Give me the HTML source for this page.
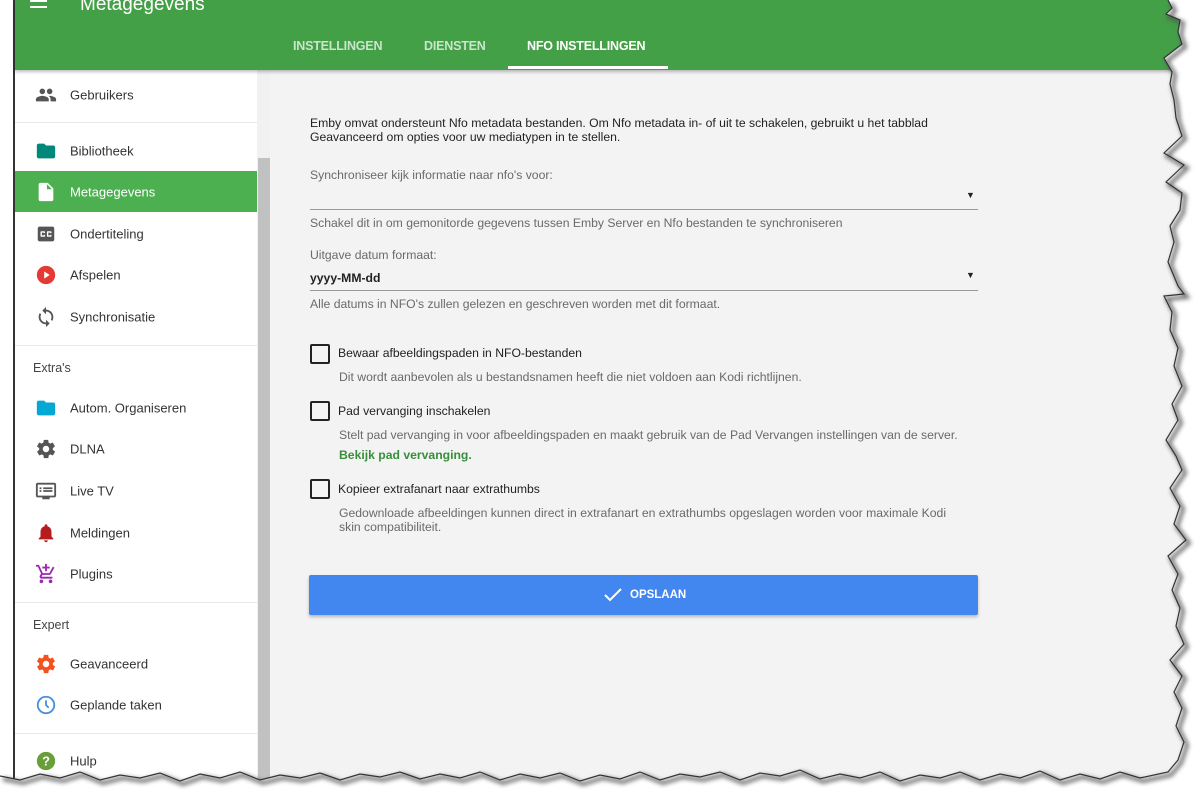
<!DOCTYPE html>
<html><head><meta charset="utf-8"><style>
*{margin:0;padding:0;box-sizing:border-box}
body{width:1200px;height:795px;overflow:hidden;background:#fff;font-family:"Liberation Sans",sans-serif;position:relative}
.abs{position:absolute}
#leftline{left:13px;top:0;width:2px;height:795px;background:#333}
#hdr{left:15px;top:0;width:1185px;height:70px;background:#43a047;box-shadow:0 2px 3px rgba(0,0,0,.25);z-index:2}
.tab{position:absolute;top:39px;font-size:12.5px;font-weight:bold;color:rgba(255,255,255,.72);letter-spacing:-.2px}
#side{left:15px;top:70px;width:242px;height:725px;background:#fff}
#sb{left:257px;top:70px;width:13px;height:725px;background:#f1f1f1}
#thumb{left:258px;top:158px;width:12px;height:637px;background:#c1c1c1}
#main{left:270px;top:70px;width:930px;height:725px;background:#f3f3f3}
.item{position:absolute;left:0;width:242px;height:41px;font-size:13px;color:#333}
.item span{position:absolute;left:55px;top:50%;transform:translateY(-50%)}
.item svg{position:absolute;left:20px;top:50%;transform:translateY(-50%)}
.div{position:absolute;left:0;width:242px;height:1px;background:#e8e8e8}
.hd{position:absolute;left:18px;font-size:12.5px;color:#444}
.t{position:absolute;left:310px;font-size:12.2px;color:#222;white-space:nowrap}
.g{color:#6a6a6a}
.line{position:absolute;left:310px;width:668px;height:1px;background:#999}
.arr{position:absolute;left:966px;font-size:9px;color:#222}
.cb{position:absolute;left:310px;width:20px;height:20px;border:2px solid #222;border-radius:2px}
</style></head><body>
<div class="abs" id="leftline"></div>
<div class="abs" id="hdr">
 <div class="abs" style="left:15px;top:0px;width:17px;height:2px;background:#fff"></div>
 <div class="abs" style="left:15px;top:6px;width:17px;height:2px;background:#fff"></div>
 <div class="abs" style="left:65px;top:-6px;font-size:19px;color:#fff">Metagegevens</div>
 <div class="tab" style="left:278px">INSTELLINGEN</div>
 <div class="tab" style="left:409px">DIENSTEN</div>
 <div class="tab" style="left:512px;color:#fff">NFO INSTELLINGEN</div>
 <div class="abs" style="left:493px;top:66px;width:160px;height:3px;background:#fff"></div>
</div>
<div class="abs" id="side">
 <div class="item" style="top:4px"><svg width="22" height="22" viewBox="0 0 24 24"><path fill="#555" d="M16 11c1.7 0 3-1.3 3-3s-1.3-3-3-3-3 1.3-3 3 1.3 3 3 3zm-8 0c1.7 0 3-1.3 3-3S9.7 5 8 5 5 6.3 5 8s1.3 3 3 3zm0 2c-2.3 0-7 1.2-7 3.5V19h14v-2.5C15 14.2 10.3 13 8 13zm8 0c-.3 0-.6 0-1 .1 1.2.8 2 2 2 3.4V19h6v-2.5c0-2.3-4.7-3.5-7-3.5z"/></svg><span>Gebruikers</span></div>
 <div class="div" style="top:52px"></div>
 <div class="item" style="top:60px"><svg width="22" height="22" viewBox="0 0 24 24"><path fill="#00897b" d="M10 4H4c-1.1 0-2 .9-2 2v12c0 1.1.9 2 2 2h16c1.1 0 2-.9 2-2V8c0-1.1-.9-2-2-2h-8l-2-2z"/></svg><span>Bibliotheek</span></div>
 <div class="item" style="top:101px;background:#4caf50;color:#fff"><svg width="22" height="22" viewBox="0 0 24 24"><path fill="#fff" d="M6 2c-1.1 0-2 .9-2 2v16c0 1.1.9 2 2 2h12c1.1 0 2-.9 2-2V8l-6-6H6zm7 7V3.5L18.5 9H13z"/></svg><span>Metagegevens</span></div>
 <div class="item" style="top:143px"><svg width="22" height="22" viewBox="0 0 24 24"><path fill="#555" d="M19 4H5c-1.1 0-2 .9-2 2v12c0 1.1.9 2 2 2h14c1.1 0 2-.9 2-2V6c0-1.1-.9-2-2-2zm-8 7H9.5v-.5h-2v3h2V13H11v1c0 .6-.4 1-1 1H7c-.6 0-1-.4-1-1v-4c0-.6.4-1 1-1h3c.6 0 1 .4 1 1v1zm7 0h-1.5v-.5h-2v3h2V13H18v1c0 .6-.4 1-1 1h-3c-.6 0-1-.4-1-1v-4c0-.6.4-1 1-1h3c.6 0 1 .4 1 1v1z"/></svg><span>Ondertiteling</span></div>
 <div class="item" style="top:184px"><svg width="22" height="22" viewBox="0 0 24 24"><circle cx="12" cy="12" r="10" fill="#e53935"/><path fill="#fff" d="M10 8l6 4-6 4z"/></svg><span>Afspelen</span></div>
 <div class="item" style="top:226px"><svg width="22" height="22" viewBox="0 0 24 24"><path fill="#555" d="M12 4V1L8 5l4 4V6c3.3 0 6 2.7 6 6 0 1-.3 2-.7 2.8l1.5 1.5C19.5 15 20 13.6 20 12c0-4.4-3.6-8-8-8zm0 14c-3.3 0-6-2.7-6-6 0-1 .3-2 .7-2.8L5.2 7.7C4.5 9 4 10.4 4 12c0 4.4 3.6 8 8 8v3l4-4-4-4v3z"/></svg><span>Synchronisatie</span></div>
 <div class="div" style="top:275px"></div>
 <div class="hd" style="top:291px">Extra's</div>
 <div class="item" style="top:317px"><svg width="22" height="22" viewBox="0 0 24 24"><path fill="#03a9d4" d="M10 4H4c-1.1 0-2 .9-2 2v12c0 1.1.9 2 2 2h16c1.1 0 2-.9 2-2V8c0-1.1-.9-2-2-2h-8l-2-2z"/></svg><span>Autom. Organiseren</span></div>
 <div class="item" style="top:358px"><svg width="22" height="22" viewBox="0 0 24 24"><path fill="#555" d="M19.4 13c.1-.3.1-.7.1-1s0-.7-.1-1l2.1-1.6c.2-.2.2-.4.1-.6l-2-3.5c-.1-.2-.4-.3-.6-.2l-2.5 1c-.5-.4-1.1-.7-1.7-1L14.5 2.4c0-.2-.2-.4-.5-.4h-4c-.3 0-.5.2-.5.4l-.4 2.7c-.6.2-1.2.6-1.7 1l-2.5-1c-.2-.1-.5 0-.6.2l-2 3.5c-.1.2-.1.5.1.6L4.6 11c0 .3-.1.7-.1 1s0 .7.1 1l-2.1 1.6c-.2.2-.2.4-.1.6l2 3.5c.1.2.4.3.6.2l2.5-1c.5.4 1.1.7 1.7 1l.4 2.7c0 .2.2.4.5.4h4c.3 0 .5-.2.5-.4l.4-2.7c.6-.2 1.2-.6 1.7-1l2.5 1c.2.1.5 0 .6-.2l2-3.5c.1-.2.1-.5-.1-.6L19.4 13zM12 15.5c-1.9 0-3.5-1.6-3.5-3.5s1.6-3.5 3.5-3.5 3.5 1.6 3.5 3.5-1.6 3.5-3.5 3.5z"/></svg><span>DLNA</span></div>
 <div class="item" style="top:400px"><svg width="22" height="22" viewBox="0 0 24 24"><path fill="#555" d="M21 3H3c-1.1 0-2 .9-2 2v12c0 1.1.9 2 2 2h5v2h8v-2h5c1.1 0 2-.9 2-2V5c0-1.1-.9-2-2-2zm0 14H3V5h18v12zM5 8h2v2H5zm0 3h2v2H5zm4-3h10v2H9zm0 3h10v2H9z"/></svg><span>Live TV</span></div>
 <div class="item" style="top:442px"><svg width="22" height="22" viewBox="0 0 24 24"><path fill="#b71c1c" d="M12 22c1.1 0 2-.9 2-2h-4c0 1.1.9 2 2 2zm6-6v-5c0-3.1-1.6-5.6-4.5-6.3V4c0-.8-.7-1.5-1.5-1.5s-1.5.7-1.5 1.5v.7C7.6 5.4 6 7.9 6 11v5l-2 2v1h16v-1l-2-2z"/></svg><span>Meldingen</span></div>
 <div class="item" style="top:483px"><svg width="22" height="22" viewBox="0 0 24 24"><path fill="#9c27b0" d="M11 9h2V6h3V4h-3V1h-2v3H8v2h3v3zm-4 9c-1.1 0-2 .9-2 2s.9 2 2 2 2-.9 2-2-.9-2-2-2zm10 0c-1.1 0-2 .9-2 2s.9 2 2 2 2-.9 2-2-.9-2-2-2zM7.2 14.8V14.7L8.1 13h7.5c.8 0 1.4-.4 1.7-1l3.9-7-1.7-1-3.9 7H8.5L4.3 2H1v2h2l3.6 7.6-1.4 2.4C5.1 14.3 5 14.7 5 15c0 1.1.9 2 2 2h12v-2H7.4c-.1 0-.2-.1-.2-.2z"/></svg><span>Plugins</span></div>
 <div class="div" style="top:532px"></div>
 <div class="hd" style="top:548px">Expert</div>
 <div class="item" style="top:573px"><svg width="22" height="22" viewBox="0 0 24 24"><path fill="#f4511e" d="M19.4 13c.1-.3.1-.7.1-1s0-.7-.1-1l2.1-1.6c.2-.2.2-.4.1-.6l-2-3.5c-.1-.2-.4-.3-.6-.2l-2.5 1c-.5-.4-1.1-.7-1.7-1L14.5 2.4c0-.2-.2-.4-.5-.4h-4c-.3 0-.5.2-.5.4l-.4 2.7c-.6.2-1.2.6-1.7 1l-2.5-1c-.2-.1-.5 0-.6.2l-2 3.5c-.1.2-.1.5.1.6L4.6 11c0 .3-.1.7-.1 1s0 .7.1 1l-2.1 1.6c-.2.2-.2.4-.1.6l2 3.5c.1.2.4.3.6.2l2.5-1c.5.4 1.1.7 1.7 1l.4 2.7c0 .2.2.4.5.4h4c.3 0 .5-.2.5-.4l.4-2.7c.6-.2 1.2-.6 1.7-1l2.5 1c.2.1.5 0 .6-.2l2-3.5c.1-.2.1-.5-.1-.6L19.4 13zM12 15.5c-1.9 0-3.5-1.6-3.5-3.5s1.6-3.5 3.5-3.5 3.5 1.6 3.5 3.5-1.6 3.5-3.5 3.5z"/></svg><span>Geavanceerd</span></div>
 <div class="item" style="top:614px"><svg width="22" height="22" viewBox="0 0 24 24"><circle cx="12" cy="12" r="9" fill="none" stroke="#4a90d9" stroke-width="2"/><path d="M12 7v5l3 3" fill="none" stroke="#4a90d9" stroke-width="2"/></svg><span>Geplande taken</span></div>
 <div class="div" style="top:663px"></div>
 <div class="item" style="top:670px"><svg width="22" height="22" viewBox="0 0 24 24"><circle cx="12" cy="12" r="10" fill="#689f38"/><text x="12" y="17" text-anchor="middle" font-size="14" font-weight="bold" fill="#fff" font-family="Liberation Sans">?</text></svg><span>Hulp</span></div>
</div>
<div class="abs" id="sb"></div>
<div class="abs" id="thumb"></div>
<div class="abs" id="main"></div>

<div class="t" style="top:116px">Emby omvat ondersteunt Nfo metadata bestanden. Om Nfo metadata in- of uit te schakelen, gebruikt u het tabblad</div>
<div class="t" style="top:130px">Geavanceerd om opties voor uw mediatypen in te stellen.</div>
<div class="t g" style="top:168px">Synchroniseer kijk informatie naar nfo's voor:</div>
<div class="arr" style="top:190px">▼</div>
<div class="line" style="top:209px"></div>
<div class="t g" style="top:216px">Schakel dit in om gemonitorde gegevens tussen Emby Server en Nfo bestanden te synchroniseren</div>
<div class="t g" style="top:248px">Uitgave datum formaat:</div>
<div class="t" style="top:271px;font-weight:bold">yyyy-MM-dd</div>
<div class="arr" style="top:270px">▼</div>
<div class="line" style="top:290px"></div>
<div class="t g" style="top:297px">Alle datums in NFO's zullen gelezen en geschreven worden met dit formaat.</div>

<div class="cb" style="top:344px"></div>
<div class="t" style="left:338px;top:346px">Bewaar afbeeldingspaden in NFO-bestanden</div>
<div class="t g" style="left:339px;top:370px">Dit wordt aanbevolen als u bestandsnamen heeft die niet voldoen aan Kodi richtlijnen.</div>
<div class="cb" style="top:401px"></div>
<div class="t" style="left:338px;top:404px">Pad vervanging inschakelen</div>
<div class="t g" style="left:339px;top:428px">Stelt pad vervanging in voor afbeeldingspaden en maakt gebruik van de Pad Vervangen instellingen van de server.</div>
<div class="t" style="left:339px;top:448px;color:#388e3c;font-weight:bold">Bekijk pad vervanging.</div>
<div class="cb" style="top:479px"></div>
<div class="t" style="left:338px;top:482px">Kopieer extrafanart naar extrathumbs</div>
<div class="t g" style="left:339px;top:506px">Gedownloade afbeeldingen kunnen direct in extrafanart en extrathumbs opgeslagen worden voor maximale Kodi</div>
<div class="t g" style="left:339px;top:520px">skin compatibiliteit.</div>

<div class="abs" style="left:309px;top:575px;width:669px;height:40px;background:#4286f0;border-radius:2px;box-shadow:0 2px 3px rgba(0,0,0,.25)"></div>
<svg class="abs" style="left:603px;top:586px" width="20" height="18" viewBox="0 0 20 18"><path d="M2 9l5 5L18 3" fill="none" stroke="#fff" stroke-width="2"/></svg>
<div class="abs" style="left:630px;top:589px;font-size:11.5px;font-weight:bold;color:#fff">OPSLAAN</div>

<svg class="abs" style="left:0;top:0;z-index:5" width="1200" height="795" viewBox="0 0 1200 795">
<defs><filter id="sh" x="-10%" y="-10%" width="120%" height="120%"><feGaussianBlur stdDeviation="2"/></filter>
<path id="edge" fill="none" d="M1168 0 L1172 8 L1166 14 L1180 20 L1178 32 L1182 44 L1164 58 L1172 72 L1170 84 L1174 100 L1176 118 L1182 136 L1164 153 L1184 165 L1166 182 L1182 193 L1180 210 L1170 226 L1174 242 L1168 262 L1178 286 L1184 294 L1164 296 L1172 312 L1170 330 L1178 348 L1174 366 L1182 386 L1172 404 L1178 420 L1166 440 L1176 456 L1182 470 L1170 488 L1180 506 L1174 524 L1186 540 L1168 556 L1178 574 L1172 590 L1180 608 L1176 626 L1184 644 L1170 660 L1182 676 L1174 692 L1182 708 L1176 726 L1184 742 L1178 760 L1168 772 L1140 778 L1120 772 L1100 779 L1080 774 L1060 780 L1040 771 L1020 778 L1000 774 L980 780 L960 772 L940 778 L920 775 L900 781 L880 772 L860 778 L840 774 L820 779 L800 770 L780 776 L760 773 L740 780 L720 772 L700 777 L680 774 L660 780 L640 772 L620 779 L600 775 L580 781 L560 773 L540 778 L520 774 L500 780 L480 772 L460 778 L440 774 L420 779 L400 772 L380 777 L360 774 L340 780 L320 773 L300 778 L280 775 L260 780 L240 772 L220 778 L200 774 L180 781 L160 773 L140 778 L120 775 L100 780 L80 772 L60 778 L40 774 L20 780 L0 776"/></defs>
<path d="M1168 0 L1172 8 L1166 14 L1180 20 L1178 32 L1182 44 L1164 58 L1172 72 L1170 84 L1174 100 L1176 118 L1182 136 L1164 153 L1184 165 L1166 182 L1182 193 L1180 210 L1170 226 L1174 242 L1168 262 L1178 286 L1184 294 L1164 296 L1172 312 L1170 330 L1178 348 L1174 366 L1182 386 L1172 404 L1178 420 L1166 440 L1176 456 L1182 470 L1170 488 L1180 506 L1174 524 L1186 540 L1168 556 L1178 574 L1172 590 L1180 608 L1176 626 L1184 644 L1170 660 L1182 676 L1174 692 L1182 708 L1176 726 L1184 742 L1178 760 L1168 772 L1140 778 L1120 772 L1100 779 L1080 774 L1060 780 L1040 771 L1020 778 L1000 774 L980 780 L960 772 L940 778 L920 775 L900 781 L880 772 L860 778 L840 774 L820 779 L800 770 L780 776 L760 773 L740 780 L720 772 L700 777 L680 774 L660 780 L640 772 L620 779 L600 775 L580 781 L560 773 L540 778 L520 774 L500 780 L480 772 L460 778 L440 774 L420 779 L400 772 L380 777 L360 774 L340 780 L320 773 L300 778 L280 775 L260 780 L240 772 L220 778 L200 774 L180 781 L160 773 L140 778 L120 775 L100 780 L80 772 L60 778 L40 774 L20 780 L0 776 L0 795 L1200 795 L1200 0 Z" fill="#fff"/>
<use href="#edge" stroke="#555" stroke-width="4" transform="translate(3,3)" filter="url(#sh)" opacity=".8"/>
<use href="#edge" stroke="#333" stroke-width="1.2"/>
</svg>
</body></html>
